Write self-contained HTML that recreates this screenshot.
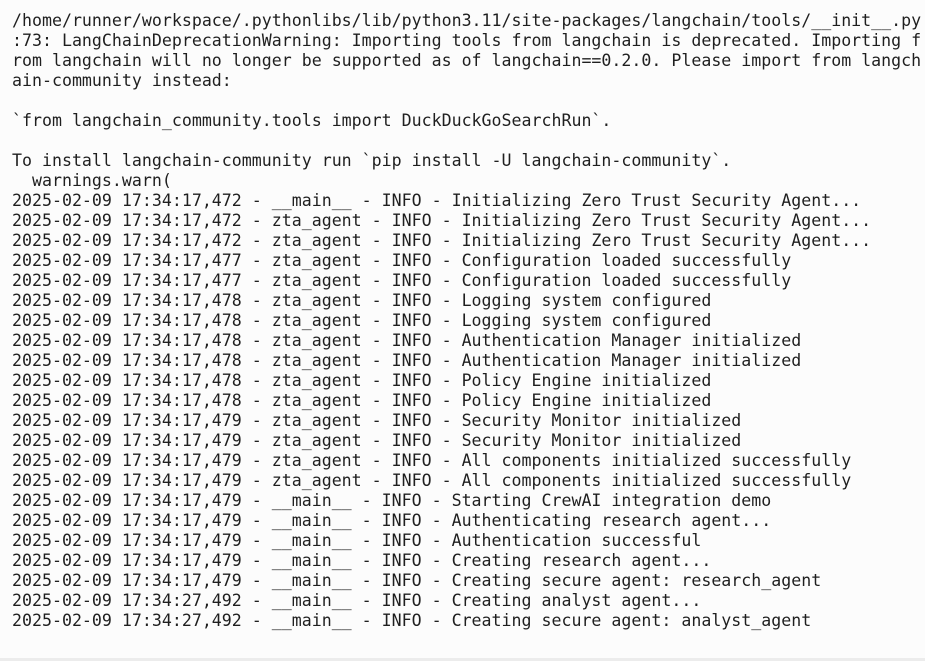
<!DOCTYPE html>
<html><head><style>
html,body{margin:0;padding:0;background:#fcfcfc;}
body{width:925px;height:661px;overflow:hidden;position:relative;}
pre{margin:0;position:absolute;left:12px;top:11px;font-family:"DejaVu Sans Mono","Liberation Mono",monospace;font-size:16.6px;line-height:20px;color:#1f1f1f;white-space:pre;}
.b{position:absolute;left:0;right:0;top:658px;height:3px;background:#ececec;}
</style></head><body>
<pre>/home/runner/workspace/.pythonlibs/lib/python3.11/site-packages/langchain/tools/__init__.py
:73: LangChainDeprecationWarning: Importing tools from langchain is deprecated. Importing f
rom langchain will no longer be supported as of langchain==0.2.0. Please import from langch
ain-community instead:

`from langchain_community.tools import DuckDuckGoSearchRun`.

To install langchain-community run `pip install -U langchain-community`.
  warnings.warn(
2025-02-09 17:34:17,472 - __main__ - INFO - Initializing Zero Trust Security Agent...
2025-02-09 17:34:17,472 - zta_agent - INFO - Initializing Zero Trust Security Agent...
2025-02-09 17:34:17,472 - zta_agent - INFO - Initializing Zero Trust Security Agent...
2025-02-09 17:34:17,477 - zta_agent - INFO - Configuration loaded successfully
2025-02-09 17:34:17,477 - zta_agent - INFO - Configuration loaded successfully
2025-02-09 17:34:17,478 - zta_agent - INFO - Logging system configured
2025-02-09 17:34:17,478 - zta_agent - INFO - Logging system configured
2025-02-09 17:34:17,478 - zta_agent - INFO - Authentication Manager initialized
2025-02-09 17:34:17,478 - zta_agent - INFO - Authentication Manager initialized
2025-02-09 17:34:17,478 - zta_agent - INFO - Policy Engine initialized
2025-02-09 17:34:17,478 - zta_agent - INFO - Policy Engine initialized
2025-02-09 17:34:17,479 - zta_agent - INFO - Security Monitor initialized
2025-02-09 17:34:17,479 - zta_agent - INFO - Security Monitor initialized
2025-02-09 17:34:17,479 - zta_agent - INFO - All components initialized successfully
2025-02-09 17:34:17,479 - zta_agent - INFO - All components initialized successfully
2025-02-09 17:34:17,479 - __main__ - INFO - Starting CrewAI integration demo
2025-02-09 17:34:17,479 - __main__ - INFO - Authenticating research agent...
2025-02-09 17:34:17,479 - __main__ - INFO - Authentication successful
2025-02-09 17:34:17,479 - __main__ - INFO - Creating research agent...
2025-02-09 17:34:17,479 - __main__ - INFO - Creating secure agent: research_agent
2025-02-09 17:34:27,492 - __main__ - INFO - Creating analyst agent...
2025-02-09 17:34:27,492 - __main__ - INFO - Creating secure agent: analyst_agent</pre>
<div class="b"></div>
</body></html>
